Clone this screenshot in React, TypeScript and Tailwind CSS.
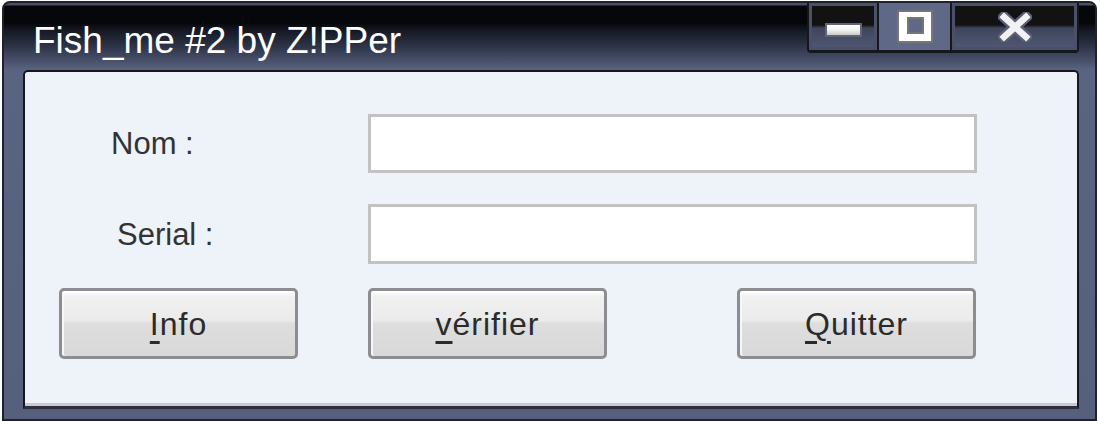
import React from "react";

function CaptionButtons() {
  return (
    <div className="flex h-[50px] w-[272px] rounded-b-[4px] border-x-2 border-b-[3px] border-[#15171d] bg-[#15171d]">
      {/* minimize */}
      <div className="flex h-full w-[68px] items-center justify-center border-[3px] border-[#4a5068] bg-[linear-gradient(to_bottom,#121212_0%,#121212_46%,#3f455b_54%,#4f5671_100%)]">
        <div className="mt-[6px] h-[14px] w-[37px] border-2 border-[#5f6478] bg-[linear-gradient(to_bottom,#ffffff_0%,#f2f2f2_50%,#c9c9c9_100%)]" />
      </div>
      <div className="w-[2px] bg-[#15171d]" />
      {/* maximize (hover) */}
      <div className="flex h-full w-[71px] items-center justify-center bg-[#5f6987]">
        <div className="h-[33px] w-[36px] border-2 border-[#767676]">
          <div className="h-full w-full border-t-[5px] border-l-[8px] border-r-[7px] border-b-[7px] border-white">
            <div className="h-full w-full border-2 border-[#767676] bg-[#5f6987]" />
          </div>
        </div>
      </div>
      <div className="w-[2px] bg-[#15171d]" />
      {/* close */}
      <div className="flex h-full flex-1 items-center justify-center border-[3px] border-[#4a5068] bg-[linear-gradient(to_bottom,#121212_0%,#121212_46%,#3f455b_54%,#4f5671_100%)]">
        <svg width="34" height="30" viewBox="0 0 34 30">
          <g strokeLinecap="square">
            <line x1="6" y1="5" x2="28" y2="25" stroke="#5b6079" strokeWidth="11" />
            <line x1="28" y1="5" x2="6" y2="25" stroke="#5b6079" strokeWidth="11" />
            <line x1="6" y1="5" x2="28" y2="25" stroke="#f2f2f2" strokeWidth="6.5" />
            <line x1="28" y1="5" x2="6" y2="25" stroke="#f2f2f2" strokeWidth="6.5" />
          </g>
        </svg>
      </div>
    </div>
  );
}

function Btn({ first, rest }: { first: string; rest: string }) {
  return (
    <div className="flex h-[71px] w-[239px] items-center justify-center rounded-[5px] border-[3px] border-[#8b8d90] bg-[linear-gradient(to_bottom,#fbfbfb_0%,#f0f0f0_10%,#ebebeb_45%,#dedede_50%,#d8d8d8_100%)] shadow-[inset_0_2px_0_#ffffff,inset_2px_0_0_#f7f7f7]">
      <span className="text-[32px] leading-none tracking-[1px] text-[#2b2b2b]">
        <span className="underline decoration-[3px] underline-offset-[6px]">{first}</span>
        {rest}
      </span>
    </div>
  );
}

export default function App() {
  return (
    <div
      className="h-[421px] w-[1100px] bg-white pl-[2px] pt-[1px]"
      style={{ fontFamily: '"Liberation Sans", Arial, sans-serif' }}
    >
      <div className="flex h-[420px] w-[1095px] flex-col rounded-t-[8px] border-2 border-[#1f222c] bg-[linear-gradient(to_bottom,#4a4f61_0px,#4a4f61_2px,#06070b_3px,#06070b_20px,#161a25_28px,#2f3549_44px,#48506b_58px,#5a6482_67px,#56607d_100%)]">
        {/* title bar */}
        <div className="flex h-[67px] shrink-0 items-start justify-between pl-[29px] pr-[16px]">
          <div className="mt-[19px] text-[37px] leading-none text-white">
            Fish_me #2 by Z!PPer
          </div>
          <CaptionButtons />
        </div>
        {/* client */}
        <div className="flex flex-1 flex-col pb-[10px] pl-[19px] pr-[16px]">
          <div className="flex flex-1 flex-col rounded-t-[5px] border-x-2 border-t-2 border-b-[3px] border-x-[#16181e] border-t-[#16181e] border-b-[#2d303c]">
            <div className="flex flex-1 flex-col rounded-t-[3px] border-b-[3px] border-[#c7cad2] bg-[#eef2f9] pt-[42px]">
              <div className="flex h-[59px] items-center">
                <div className="w-[343px] pl-[86px] text-[31px] leading-none text-[#333333]">Nom :</div>
                <div className="h-[59px] w-[609px] border-[3px] border-[#c2c2c2] bg-white" />
              </div>
              <div className="mt-[31px] flex h-[60px] items-center">
                <div className="w-[343px] pl-[92px] text-[31px] leading-none text-[#333333]">Serial :</div>
                <div className="h-[60px] w-[609px] border-[3px] border-[#c2c2c2] bg-white" />
              </div>
              <div className="mt-[24px] flex">
                <div className="ml-[34px]">
                  <Btn first="I" rest="nfo" />
                </div>
                <div className="ml-[70px]">
                  <Btn first="v" rest="érifier" />
                </div>
                <div className="ml-[130px]">
                  <Btn first="Q" rest="uitter" />
                </div>
              </div>
            </div>
          </div>
        </div>
      </div>
    </div>
  );
}
